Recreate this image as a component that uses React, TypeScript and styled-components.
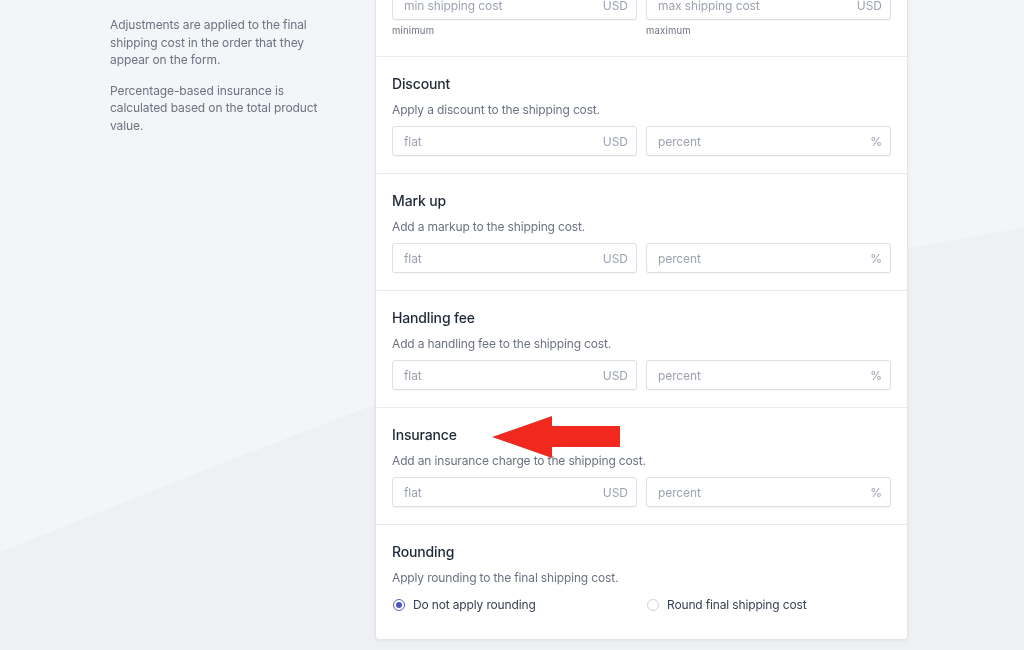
import React from "react";
import styled, { createGlobalStyle } from "styled-components";

const Global = createGlobalStyle`
  html, body { margin: 0; padding: 0; }
  body {
    background: #f4f5f8;
    font-family: Inter, "Noto Sans", "Liberation Sans", sans-serif;
    overflow: hidden;
    height: 650px;
  }
  #root { position: relative; min-height: 650px; }
`;

const Backdrop = styled.svg`
  position: fixed;
  inset: 0;
  width: 1024px;
  height: 650px;
  z-index: 0;
`;

const Layout = styled.div`
  position: relative;
  z-index: 1;
  display: grid;
  grid-template-columns: 220px 533px;
  column-gap: 45px;
  padding-left: 110px;
  align-items: start;
`;

const Aside = styled.div`
  padding-top: 16px;
  display: flex;
  flex-direction: column;
  gap: 13px;
`;

const AsideText = styled.p`
  margin: 0;
  font-size: 12px;
  line-height: 17.5px;
  letter-spacing: -0.1px;
  color: #6b7280;
`;

const Card = styled.div`
  margin-top: -11px;
  background: #ffffff;
  border: 1px solid #e2e4e8;
  border-radius: 4px;
  box-shadow: 0 1px 3px rgba(15, 23, 42, 0.06);
`;

const Section = styled.section<{ $first?: boolean }>`
  position: relative;
  padding: ${(p) => (p.$first ? "0 16px 19px" : "17px 16px 17px")};
  border-top: ${(p) => (p.$first ? "none" : "1px solid #e8eaed")};
  display: flex;
  flex-direction: column;
`;

const Title = styled.h3`
  margin: 0;
  font-size: 14px;
  line-height: 20px;
  font-weight: 500;
  letter-spacing: -0.15px;
  color: #1f2937;
`;

const Desc = styled.p`
  margin: 8px 0 8px;
  font-size: 12px;
  line-height: 16px;
  letter-spacing: -0.15px;
  color: #6b7280;
`;

const Row = styled.div`
  display: grid;
  grid-template-columns: 1fr 1fr;
  column-gap: 9px;
`;

const Field = styled.div`
  display: flex;
  flex-direction: column;
`;

const InputBox = styled.div`
  height: 30px;
  box-sizing: border-box;
  border: 1px solid #dcdfe4;
  border-radius: 3px;
  box-shadow: 0 1px 1px rgba(0, 0, 0, 0.04);
  display: flex;
  align-items: center;
  padding: 0 8px 0 11px;
  background: #fff;
`;

const Input = styled.input`
  flex: 1;
  min-width: 0;
  border: none;
  outline: none;
  background: transparent;
  padding: 0;
  font-family: inherit;
  font-size: 12px;
  letter-spacing: -0.1px;
  color: #374151;
  &::placeholder { color: #9ca3af; }
`;

const Suffix = styled.span`
  font-size: 12px;
  color: #9ca3af;
`;

const Hint = styled.span`
  margin-top: 5px;
  font-size: 9.5px;
  line-height: 12px;
  color: #6b7280;
  letter-spacing: 0.2px;
`;

const RadioRow = styled.div`
  display: grid;
  grid-template-columns: 1fr 1fr;
  column-gap: 9px;
  margin-top: 3px;
  padding-bottom: 9px;
`;

const RadioLabel = styled.label`
  display: flex;
  align-items: center;
  gap: 8px;
  font-size: 12px;
  line-height: 16px;
  letter-spacing: -0.15px;
  color: #374151;
  padding-left: 1px;
`;

const RadioDot = styled.span<{ $checked?: boolean }>`
  width: 12px;
  height: 12px;
  box-sizing: border-box;
  border-radius: 50%;
  border: 1px solid ${(p) => (p.$checked ? "#5a5fc9" : "#cfd2d7")};
  display: inline-flex;
  align-items: center;
  justify-content: center;
  background: #fff;
  &::after {
    content: "";
    width: 6px;
    height: 6px;
    border-radius: 50%;
    background: ${(p) => (p.$checked ? "#4f54c4" : "transparent")};
  }
`;

const Arrow = styled.svg`
  position: absolute;
  left: 116px;
  top: 8px;
  width: 128px;
  height: 42px;
  pointer-events: none;
`;

function MoneyField({ placeholder, suffix, hint }: { placeholder: string; suffix: string; hint?: string }) {
  return (
    <Field>
      <InputBox>
        <Input placeholder={placeholder} />
        <Suffix>{suffix}</Suffix>
      </InputBox>
      {hint && <Hint>{hint}</Hint>}
    </Field>
  );
}

function AdjustSection({ title, desc, children }: { title: string; desc: string; children?: React.ReactNode }) {
  return (
    <Section>
      <Title>{title}</Title>
      <Desc>{desc}</Desc>
      <Row>
        <MoneyField placeholder="flat" suffix="USD" />
        <MoneyField placeholder="percent" suffix="%" />
      </Row>
      {children}
    </Section>
  );
}

export default function App() {
  return (
    <>
      <Global />
      <Backdrop viewBox="0 0 1024 650" preserveAspectRatio="none">
        <rect width="1024" height="650" fill="#f4f5f8" />
        <path d="M0 552 C 260 450, 620 290, 1024 228 L1024 650 L0 650 Z" fill="#eff0f3" />
      </Backdrop>
      <Layout>
        <Aside>
          <AsideText>
            Adjustments are applied to the final shipping cost in the order that they appear on the form.
          </AsideText>
          <AsideText>Percentage-based insurance is calculated based on the total product value.</AsideText>
        </Aside>
        <Card>
          <Section $first>
            <Row>
              <MoneyField placeholder="min shipping cost" suffix="USD" hint="minimum" />
              <MoneyField placeholder="max shipping cost" suffix="USD" hint="maximum" />
            </Row>
          </Section>
          <AdjustSection title="Discount" desc="Apply a discount to the shipping cost." />
          <AdjustSection title="Mark up" desc="Add a markup to the shipping cost." />
          <AdjustSection title="Handling fee" desc="Add a handling fee to the shipping cost." />
          <AdjustSection title="Insurance" desc="Add an insurance charge to the shipping cost.">
            <Arrow viewBox="0 0 128 42">
              <polygon points="0,21 60,0 60,10 128,10 128,31 60,31 60,42" fill="#f1281d" />
            </Arrow>
          </AdjustSection>
          <Section>
            <Title>Rounding</Title>
            <Desc>Apply rounding to the final shipping cost.</Desc>
            <RadioRow>
              <RadioLabel>
                <RadioDot $checked />
                Do not apply rounding
              </RadioLabel>
              <RadioLabel>
                <RadioDot />
                Round final shipping cost
              </RadioLabel>
            </RadioRow>
          </Section>
        </Card>
      </Layout>
    </>
  );
}
